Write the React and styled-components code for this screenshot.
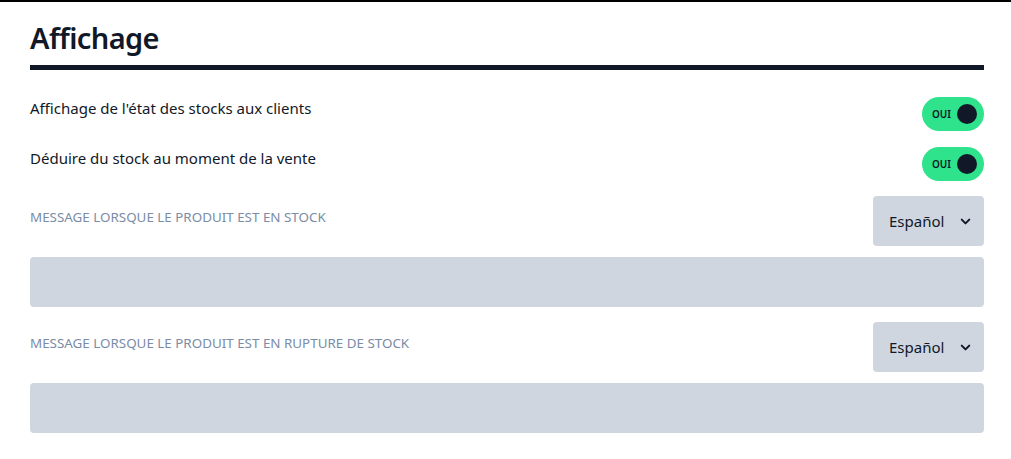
import styled, { createGlobalStyle } from 'styled-components';

const GlobalStyle = createGlobalStyle`
  html, body {
    margin: 0;
    padding: 0;
    background: #fff;
  }
  body {
    font-family: "Noto Sans", "Open Sans", sans-serif;
    color: #111827;
    border-top: 2px solid #000;
  }
  * {
    box-sizing: border-box;
  }
`;

function Toggle ({ on }) {
  return (
    <ToggleWrap $on={on}>
      <span className='ToggleText'>OUI</span>
      <span className='ToggleKnob' />
    </ToggleWrap>
  );
}

function LangSelect () {
  return (
    <SelectBox>
      <span>Español</span>
      <svg width='15' height='15' viewBox='0 0 24 24' fill='none' stroke='#111827' strokeWidth='3.2' strokeLinecap='round' strokeLinejoin='round'>
        <path d='M6 9l6 6 6-6' />
      </svg>
    </SelectBox>
  );
}

function App () {
  return (
    <>
      <GlobalStyle />
      <Page>
        <Title>Affichage</Title>
        <Rule />
        <ToggleRow>
          <RowLabel>Affichage de l'état des stocks aux clients</RowLabel>
          <Toggle on />
        </ToggleRow>
        <ToggleRow>
          <RowLabel>Déduire du stock au moment de la vente</RowLabel>
          <Toggle on />
        </ToggleRow>
        <Field>
          <FieldHead>
            <FieldLabel>Message lorsque le produit est en stock</FieldLabel>
            <LangSelect />
          </FieldHead>
          <TextInput />
        </Field>
        <Field>
          <FieldHead>
            <FieldLabel>Message lorsque le produit est en rupture de stock</FieldLabel>
            <LangSelect />
          </FieldHead>
          <TextInput />
        </Field>
      </Page>
    </>
  );
}

export default App;

const Page = styled.div`
  padding: 16px 27px 0 30px;
  display: flex;
  flex-direction: column;
`;

const Title = styled.h1`
  margin: 0;
  font-size: 29px;
  line-height: 40px;
  font-weight: 600;
  letter-spacing: -0.6px;
  color: #111827;
`;

const Rule = styled.div`
  height: 5px;
  background: #111827;
  margin-top: 7px;
  margin-bottom: 27px;
`;

const ToggleRow = styled.div`
  display: flex;
  justify-content: space-between;
  align-items: flex-start;
  height: 34px;
  margin-bottom: 16px;

  & + & {
    margin-bottom: 15px;
  }
`;

const RowLabel = styled.div`
  font-size: 15px;
  line-height: 22px;
`;

const ToggleWrap = styled.div`
  width: 62px;
  height: 34px;
  border-radius: 17px;
  background: ${p => (p.$on ? '#2ee38c' : '#cfd6e0')};
  display: flex;
  align-items: center;
  justify-content: space-between;
  padding: 0 7px 0 10px;
  cursor: pointer;

  .ToggleText {
    font-size: 10px;
    font-weight: 600;
    color: #111827;
  }

  .ToggleKnob {
    width: 20px;
    height: 20px;
    border-radius: 50%;
    background: #111827;
  }
`;

const Field = styled.div`
  display: flex;
  flex-direction: column;
  gap: 11px;
  margin-bottom: 15px;
`;

const FieldHead = styled.div`
  display: flex;
  justify-content: space-between;
  align-items: flex-start;
`;

const FieldLabel = styled.div`
  text-transform: uppercase;
  font-size: 13.4px;
  line-height: 18px;
  padding-top: 12px;
  color: #7b8ca6;
`;

const SelectBox = styled.div`
  width: 111px;
  height: 50px;
  border-radius: 4px;
  background: #cfd6e0;
  display: flex;
  align-items: center;
  justify-content: space-between;
  padding: 0 11px 0 16px;
  font-size: 15px;
  color: #111827;
`;

const TextInput = styled.div`
  height: 50px;
  border-radius: 4px;
  background: #cfd6e0;
`;
